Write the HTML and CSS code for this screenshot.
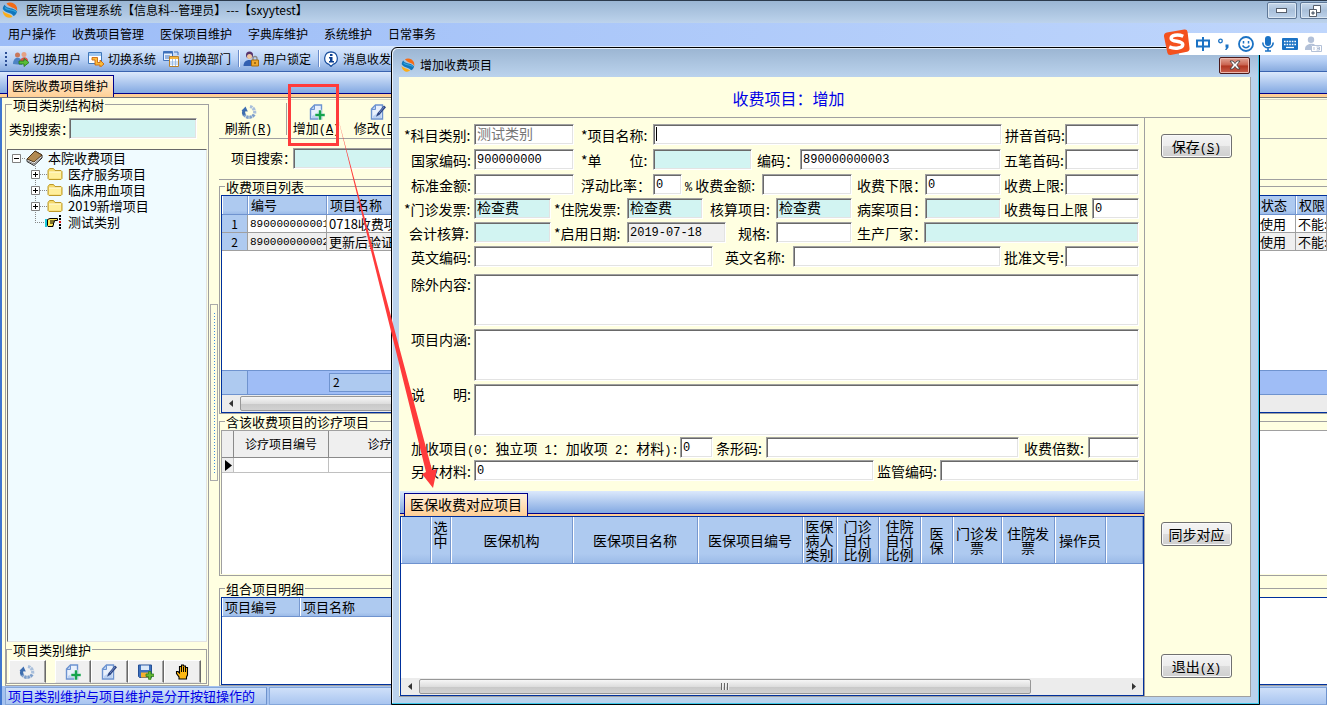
FILE: index.html
```html
<!DOCTYPE html>
<html lang="zh-CN">
<head>
<meta charset="utf-8">
<title>医院项目管理系统</title>
<link rel="stylesheet" href="styles.css">
</head>
<body>
<svg class="defs" aria-hidden="true">
  <symbol id="i-logo" viewBox="0 0 16 16">
    <path d="M4.500 1.500C8-.6 13.500 1 15 5.500L15.300 9C12.500 5 8 6 4.500 1.500z" fill="#f36b16"/>
    <path d="M2.500 2.800C5.500 7.500 11 5 15 9.500 14.500 12 13 13.500 11.500 14 9 10 4 11.500 .8 7 .8 5.500 1.500 4 2.500 2.800z" fill="#1177bd"/>
    <path d="M3 5.500c3 3.500 8 1.500 11 4.500" fill="none" stroke="#2fa5dd" stroke-width="1.200"/>
    <path d="M.6 9C4 12.500 7.500 11 10.500 14.700 6.500 17 1.500 15 .6 9z" fill="#fbad18"/>
  </symbol>
  <symbol id="i-refresh" viewBox="0 0 16 16">
    <path d="M9 2.500A6 6 0 0 1 13.500 10" fill="none" stroke="#a9bfdb" stroke-width="3.200" stroke-dasharray="2.600 .6"/>
    <path d="M13.200 10.500A6 6 0 0 1 3 10.500" fill="none" stroke="#7d9fcb" stroke-width="3.200" stroke-dasharray="2.600 .6"/>
    <path d="M3.200 11A6 6 0 0 1 3 6" fill="none" stroke="#3f6fae" stroke-width="3.200"/>
    <path d="M.5 7L4.500 2.500 6.800 7.500z" fill="#3c6db0"/>
  </symbol>
  <symbol id="i-page" viewBox="0 0 16 16">
    <path d="M5.500 1h7v14h-11V5z" fill="#e9f1fc" stroke="#6c93d0" stroke-width="1.400"/>
    <path d="M1.500 5.500h4V1z" fill="#b9cff0" stroke="#6c93d0"/>
    <path d="M3 12l8-5v7H3z" fill="#bcd2f2"/>
  </symbol>
  <symbol id="i-add" viewBox="0 0 16 16">
    <use href="#i-page"/>
    <path d="M9.500 6h3v3.500H16v3h-3.500V16h-3v-3.500H6v-3h3.500z" fill="#16a34c" stroke="#fff" stroke-width=".5"/>
  </symbol>
  <symbol id="i-edit" viewBox="0 0 16 16">
    <use href="#i-page"/>
    <path d="M14 1.500l2 1.800-6.500 7.500-3.500 2 1.500-3.800z" fill="#2c4480"/>
    <path d="M14 3L9 9" stroke="#6f89c6"/>
  </symbol>
  <symbol id="i-save" viewBox="0 0 16 16">
    <path d="M.5 1h13v12.500h-12l-1-1z" fill="#3d70bd" stroke="#244f96"/>
    <path d="M3 1.500h8V6H3z" fill="#dce9f8"/><path d="M3 8.500h8v5H3z" fill="#f3b02f"/>
    <path d="M10.500 7.500h2.500V10h2.800v2.500H13v2.800h-2.500v-2.800H8V10h2.500z" fill="#64b735" stroke="#2f7f1d" stroke-width=".8"/>
  </symbol>
  <symbol id="i-hand" viewBox="0 0 16 16">
    <path d="M4 15v-2L1.500 9.500V7.500H3L4.500 9V2.500h2V1h2v1h2v1.500h2V11L11.500 13v2z" fill="#fdb813" stroke="#000" stroke-width="1.100"/>
    <path d="M6.500 3v5M8.500 3v5M10.500 4v4" stroke="#000"/>
  </symbol>
  <symbol id="i-folder" viewBox="0 0 16 14">
    <path d="M1 3.500L2.500 1.500h4L8 3.500h6l1 1v7l-1 1H2l-1-1z" fill="#f5d96a" stroke="#bd9a2a"/>
    <path d="M2 5h12v6.500H2z" fill="#ffef9c"/><path d="M2 5h12" stroke="#fffbe0"/>
  </symbol>
</svg>

<div class="app">
  <header class="titlebar">
    <svg class="logo"><use href="#i-logo"/></svg>
    <h1 class="title-text">医院项目管理系统【信息科--管理员】---【sxyytest】</h1>
    <button class="win-btn" aria-label="最小化"><svg width="12" height="6"><rect x=".5" y=".5" width="10" height="4" fill="#fff" stroke="#555e6b"/></svg></button>
    <button class="win-btn" aria-label="还原"><svg width="12" height="12"><path d="M4.500.5h7v7h-7z" fill="#fff" stroke="#555e6b"/><path d="M.5 4.500h7v7h-7z" fill="#fff" stroke="#555e6b"/><path d="M3 7h2v2H3z" fill="#9ab" stroke="#555e6b"/></svg></button>
  </header>
  <nav class="menubar">
    <a href="#">用户操作</a><a href="#">收费项目管理</a><a href="#">医保项目维护</a><a href="#">字典库维护</a><a href="#">系统维护</a><a href="#">日常事务</a>
  </nav>
  <div class="toolbar">
    <span class="grip"></span>
    <button class="tool"><svg viewBox="0 0 16 16"><circle cx="4.500" cy="4" r="2.500" fill="#c9785c"/><circle cx="11" cy="3.500" r="2.500" fill="#e6a184"/><path d="M0 13c0-8 8-8 9-2v3z" fill="#4e83c4"/><path d="M7 10c1-5 8-5 8 0z" fill="#da5746"/><path d="M6 10h5V7.500l5 4-5 4V13H6z" fill="#59bd37" stroke="#25731c" stroke-width=".8"/></svg>切换用户</button>
    <button class="tool"><svg viewBox="0 0 16 16"><path d="M.5 1.500h13v11H.5z" fill="#fff" stroke="#3f77ba"/><path d="M1 2h12v3H1z" fill="#9fc6ee"/><path d="M4 6.500h5.500v5H12V9l4 4-4 3.500V14H7V9H4z" fill="#fbbc38" stroke="#ca6510" stroke-width=".9"/></svg>切换系统</button>
    <button class="tool"><svg viewBox="0 0 16 16"><path d="M.5.5h9v9h-9z" fill="#eaf3ff" stroke="#4275bf"/><path d="M.5.500h9v2h-9z" fill="#3e70b9"/><path d="M2 5h5M2 7h4M11 1h4v3" stroke="#4275bf" fill="none"/><path d="M6.500 5.500h9v10h-9z" fill="#fff" stroke="#b8812d"/><path d="M7 6h8v2H7z" fill="#f5b640"/><path d="M7 11h8M7 13h8M9.500 8v7M12.500 8v7" stroke="#8db2e2" stroke-width=".8"/></svg>切换部门</button>
    <span class="tool-sep"></span>
    <button class="tool"><svg viewBox="0 0 16 16"><circle cx="6.500" cy="4" r="3.500" fill="#56336c"/><circle cx="6.500" cy="5.500" r="2.500" fill="#f0c8a3"/><path d="M.5 15c0-8 11-8 12 0z" fill="#315fb0"/><path d="M10 9V7.500a2 2 0 0 1 4 0V9" fill="none" stroke="#888" stroke-width="1.300"/><path d="M8.500 9h7v6h-7z" fill="#efa92f" stroke="#a66d10"/><path d="M12 11v2" stroke="#573500"/></svg>用户锁定</button>
    <span class="tool-sep"></span>
    <button class="tool"><svg viewBox="0 0 16 16"><path d="M8 .8a6.500 6.500 0 0 1 2 12.600L8 15.500 6 13.400A6.500 6.500 0 0 1 8 .8z" fill="#fff" stroke="#174d9c" stroke-width="1.200"/><path d="M7 3h2.500v2H7zM6 6h3.500v4H11v1.500H6V10h1V7.500H6z" fill="#0b3f91"/></svg>消息收发</button>
  </div>
  <div class="tabstrip"><a class="tab" href="#">医院收费项目维护</a></div>

  <main class="workspace">
    <fieldset class="group category">
      <legend>项目类别结构树</legend>
      <div class="cat-search"><label for="cat-q">类别搜索：</label><input id="cat-q" class="box tint"></div>
      <ul class="tree">
        <li class="node root"><svg width="15" height="16"><path d="M11 8.500h4" stroke="#888" stroke-dasharray="1 1"/><path d="M1.500 4.500h8v8h-8z" fill="#fff" stroke="#808080"/><path d="M3 8.500h5" stroke="#000"/></svg><svg width="17" height="16"><path d="M1 9L9 1l7 4v3l-8 7.500-7-4z" fill="#fff" stroke="#222"/><path d="M1 9l8-8 7 4-8 7z" fill="#b28a51" stroke="#4b351b"/><path d="M2 11l6 3 8-7" fill="none" stroke="#777"/></svg><span>本院收费项目</span></li>
        <li class="node"><svg width="17" height="16"><path d="M5.500 0v16M10 8.500h7" stroke="#888" stroke-dasharray="1 1"/><path d="M1.500 4.500h8v8h-8z" fill="#fff" stroke="#808080"/><path d="M3 8.500h5M5.500 6v5" stroke="#000"/></svg><svg width="16" height="14"><use href="#i-folder"/></svg><span>医疗服务项目</span></li>
        <li class="node"><svg width="17" height="16"><path d="M5.500 0v16M10 8.500h7" stroke="#888" stroke-dasharray="1 1"/><path d="M1.500 4.500h8v8h-8z" fill="#fff" stroke="#808080"/><path d="M3 8.500h5M5.500 6v5" stroke="#000"/></svg><svg width="16" height="14"><use href="#i-folder"/></svg><span>临床用血项目</span></li>
        <li class="node"><svg width="17" height="16"><path d="M5.500 0v16M10 8.500h7" stroke="#888" stroke-dasharray="1 1"/><path d="M1.500 4.500h8v8h-8z" fill="#fff" stroke="#808080"/><path d="M3 8.500h5M5.500 6v5" stroke="#000"/></svg><svg width="16" height="14"><use href="#i-folder"/></svg><span>2019新增项目</span></li>
        <li class="node"><svg width="15" height="16"><path d="M5.500 0v9M5 8.500h10" fill="none" stroke="#888" stroke-dasharray="1 1"/></svg><svg width="18" height="16"><path d="M0 5h2v8H0z" fill="#18c8d8"/><path d="M2.500 5.500L5 4.500h7.500v2H9.500v1H9v1.500h-.5V11H8v1.500H3l-.5-1z" fill="#ffe95a" stroke="#000"/><path d="M5 7h4M5 9h3.500" stroke="#000"/><path d="M14 1h2v2h-2zM14 4h2v2h-2zM14 10h2v2h-2zM14 13h2v2h-2z"/><path d="M14 7h2v2h-2z" fill="#e31616"/></svg><span>测试类别</span></li>
      </ul>
      <fieldset class="group cat-tools">
        <legend>项目类别维护</legend>
        <div class="cat-buttons">
          <button class="flat first" aria-label="刷新"><svg><use href="#i-refresh"/></svg></button>
          <button class="flat" aria-label="增加"><svg><use href="#i-add"/></svg></button>
          <button class="flat" aria-label="修改"><svg><use href="#i-edit"/></svg></button>
          <button class="flat" aria-label="保存"><svg><use href="#i-save"/></svg></button>
          <button class="flat" aria-label="停用"><svg><use href="#i-hand"/></svg></button>
        </div>
      </fieldset>
    </fieldset>

    <div class="splitter"><span class="handle"></span></div>

    <section class="items">
      <div class="actions">
        <button class="action"><svg><use href="#i-refresh"/></svg><span>刷新<span class="hw">(<u>R</u>)</span></span></button>
        <span class="action-sep"></span>
        <button class="action"><svg><use href="#i-add"/></svg><span>增加<span class="hw">(<u>A</u>)</span></span></button>
        <button class="action"><svg><use href="#i-edit"/></svg><span>修改<span class="hw">(<u>D</u>)</span></span></button>
      </div>
      <div class="item-search"><label for="item-q">项目搜索：</label><input id="item-q" class="box tint"></div>

      <fieldset class="group list-group">
        <legend>收费项目列表</legend>
        <div class="grid-frame">
          <table class="grid">
            <colgroup><col class="c-stub"><col class="c-code"><col class="c-name"><col><col class="c-state"><col class="c-right"></colgroup>
            <thead><tr><th></th><th>编号</th><th>项目名称</th><th></th><th>状态</th><th>权限</th></tr></thead>
            <tbody>
              <tr><td class="stub">1</td><td class="num">890000000001</td><td>0718收费项目</td><td></td><td>使用</td><td>不能:</td></tr>
              <tr class="alt"><td class="stub">2</td><td class="num">890000000002</td><td>更新后验证项</td><td></td><td>使用</td><td>不能:</td></tr>
            </tbody>
          </table>
          <div class="grid-foot"><span class="foot-stub"></span><span class="foot-count">2</span></div>
          <div class="hscroll"><svg class="arrow" viewBox="0 0 4 7"><path d="M4 0v7L0 3.500z"/></svg><span class="thumb list-thumb"></span></div>
        </div>
      </fieldset>

      <fieldset class="group detail-group">
        <legend>含该收费项目的诊疗项目</legend>
        <div class="sheet">
          <table class="plain">
            <colgroup><col class="c-mark"><col class="c-dcode"><col></colgroup>
            <thead><tr><th></th><th>诊疗项目编号</th><th>诊疗项目</th></tr></thead>
            <tbody><tr><td class="mark"><svg width="7" height="11"><path d="M0 0v11l7-5.500z"/></svg></td><td></td><td></td></tr></tbody>
          </table>
        </div>
      </fieldset>

      <fieldset class="group combo-group">
        <legend>组合项目明细</legend>
        <div class="grid-frame">
          <table class="grid combo">
            <colgroup><col class="c-combo"><col></colgroup>
            <thead><tr><th>项目编号</th><th>项目名称</th></tr></thead>
          </table>
        </div>
      </fieldset>
    </section>
  </main>
  <footer class="status"><span class="panel hint">项目类别维护与项目维护是分开按钮操作的</span><span class="panel rest"></span></footer>
</div>

<section class="dialog" role="dialog" aria-labelledby="dlg-title">
  <header class="dlg-bar">
    <svg class="logo"><use href="#i-logo"/></svg>
    <h2 id="dlg-title" class="title-text">增加收费项目</h2>
    <button class="close" aria-label="关闭"><svg width="12" height="10"><path d="M1 1h3l2 2.500L8 1h3L7.800 5 11 9H8L6 6.500 4 9H1l3.200-4z" fill="#fff" stroke="#444" stroke-width=".9"/></svg></button>
  </header>
  <div class="dlg-body">
    <p class="dlg-heading">收费项目：增加</p>
    <div class="dlg-main">
      <div class="dlg-left">
        <form class="form">
          <div class="rows loose">
            <div class="row r1">
              <label for="f1">*科目类别:</label><input id="f1" class="box muted" value="测试类别">
              <label for="f2" class="pl">*项目名称:</label><span class="caret-field"><input id="f2" class="box"></span>
              <label for="f3" class="ps">拼音首码:</label><input id="f3" class="box">
            </div>
            <div class="row r2">
              <label for="f4" class="pl">国家编码:</label><input id="f4" class="box num-val" value="900000000">
              <label for="f5" class="pl">*单　　位:</label><input id="f5" class="box tint">
              <label for="f6" class="pm">编码：</label><input id="f6" class="box num-val" value="890000000003">
              <label for="f7" class="ps">五笔首码:</label><input id="f7" class="box">
            </div>
            <div class="row r3">
              <label for="f8" class="pl">标准金额:</label><input id="f8" class="box">
              <label for="f9" class="pl">浮动比率：</label><input id="f9" class="box num-val" value="0">
              <label for="f10" class="ps"><span class="hw">%</span> 收费金额:</label><input id="f10" class="box">
              <label for="f11" class="pm">收费下限：</label><input id="f11" class="box num-val" value="0">
              <label for="f12" class="ps">收费上限:</label><input id="f12" class="box">
            </div>
          </div>
          <div class="rows">
            <div class="row r4">
              <label for="f13">*门诊发票:</label><input id="f13" class="box tint" value="检查费">
              <label for="f14" class="ps">*住院发票:</label><input id="f14" class="box tint" value="检查费">
              <label for="f15" class="pl">核算项目:</label><input id="f15" class="box tint" value="检查费">
              <label for="f16" class="pm">病案项目：</label><input id="f16" class="box tint">
              <label for="f17" class="ps">收费每日上限</label><input id="f17" class="box num-val" value="0">
            </div>
            <div class="row r5">
              <label for="f18" class="pm">会计核算:</label><input id="f18" class="box tint">
              <label for="f19" class="ps">*启用日期:</label><input id="f19" class="box num-val readonly" value="2019-07-18" readonly>
              <label for="f20" class="px">规格:</label><input id="f20" class="box">
              <label for="f21" class="pm">生产厂家：</label><input id="f21" class="box tint">
            </div>
            <div class="row r6">
              <label for="f22" class="pl">英文编码:</label><input id="f22" class="box">
              <label for="f23" class="px">英文名称:</label><input id="f23" class="box">
              <label for="f24" class="ps">批准文号:</label><input id="f24" class="box">
            </div>
          </div>
          <div class="rows notes">
            <div class="row rt"><label for="f25" class="pl">除外内容:</label><textarea id="f25" class="box"></textarea></div>
            <div class="row rt"><label for="f26" class="pl">项目内涵:</label><textarea id="f26" class="box"></textarea></div>
            <div class="row rt"><label for="f27" class="pl">说　　明:</label><textarea id="f27" class="box"></textarea></div>
          </div>
          <div class="rows tight">
            <div class="row r7">
              <label for="f28" class="pl">加收项目<span class="hw">(0</span>：独立项<span class="hw"> 1</span>：加收项<span class="hw"> 2</span>：材料<span class="hw">):</span></label><input id="f28" class="box num-val" value="0">
              <label for="f29" class="ps">条形码:</label><input id="f29" class="box">
              <label for="f30" class="pm">收费倍数:</label><input id="f30" class="box">
            </div>
            <div class="row r8">
              <label for="f31" class="pl">另收材料:</label><input id="f31" class="box num-val" value="0">
              <label for="f32" class="ps">监管编码:</label><input id="f32" class="box">
            </div>
          </div>
        </form>
        <div class="tabstrip dlg-tabs"><a class="tab" href="#">医保收费对应项目</a></div>
        <div class="grid-frame map-frame">
          <table class="grid map">
            <colgroup><col class="m1"><col class="m2"><col class="m3"><col class="m4"><col class="m5"><col class="m6"><col class="m7"><col class="m7"><col class="m8"><col class="m9"><col class="m10"><col class="m11"><col></colgroup>
            <thead><tr><th></th><th class="up">选中</th><th>医保机构</th><th>医保项目名称</th><th>医保项目编号</th><th>医保<br>病人<br>类别</th><th>门诊<br>自付<br>比例</th><th>住院<br>自付<br>比例</th><th>医<br>保</th><th>门诊发<br>票</th><th>住院发<br>票</th><th>操作员</th><th></th></tr></thead>
          </table>
          <div class="hscroll"><svg class="arrow" viewBox="0 0 4 7"><path d="M4 0v7L0 3.500z"/></svg><span class="thumb map-thumb"><i></i><i></i><i></i></span><svg class="arrow end" viewBox="0 0 4 7"><path d="M0 0v7l4-3.500z"/></svg></div>
        </div>
      </div>
      <div class="dlg-side">
        <button class="push">保存<span class="hw">(<u>S</u>)</span></button>
        <button class="push sync">同步对应</button>
        <button class="push">退出<span class="hw">(<u>X</u>)</span></button>
      </div>
    </div>
  </div>
</section>

<div class="ime">
  <svg class="ime-logo" viewBox="0 0 28 28"><path d="M4 3.500l18-3q3-.5 3.500 2.500l2 17q.3 3-2.500 3.500l-17 3.500q-3 .3-3.500-2.500L1 7.500Q.8 4.300 4 3.500z" fill="#f4511e"/><path d="M21 7.500C15 5 8 6.500 8.500 10c.5 3.500 12 2 12 6 0 4-8 5-14 2.500" fill="none" stroke="#fff" stroke-width="3.600"/></svg>
  <svg width="14" height="16" viewBox="1 0 14 16"><path d="M2 4.500h12v6H2zM8 1v14" fill="none" stroke="#1b72c4" stroke-width="2"/></svg>
  <svg width="14" height="16" viewBox="0 0 14 16"><circle cx="3.500" cy="5" r="1.800" fill="none" stroke="#1b72c4" stroke-width="1.300"/><path d="M8.500 8.500h3v3l-2 2.500H8l1.300-2.500h-.8z" fill="#1b72c4"/></svg>
  <svg width="16" height="16" viewBox="0 0 16 16"><circle cx="8" cy="8" r="7" fill="none" stroke="#1b72c4" stroke-width="1.800"/><path d="M5.500 5v2.500M10.500 5v2.500M4.500 9.500q3.500 4.500 7 0" fill="none" stroke="#1b72c4" stroke-width="1.500"/></svg>
  <svg width="14" height="16" viewBox="0 0 14 16"><rect x="4" y="0" width="6" height="10" rx="3" fill="#1b72c4"/><path d="M1.800 6.500c0 7 10.400 7 10.400 0M7 12v3M4 15h6" fill="none" stroke="#1b72c4" stroke-width="1.600"/></svg>
  <svg width="16" height="16" viewBox="0 0 16 16"><rect y="2" width="16" height="12" rx="1" fill="#1b72c4"/><path d="M2 5.500h12M2 8.500h12" stroke="#fff" stroke-width="1.600" stroke-dasharray="1.600 1"/><path d="M4 11.500h8" stroke="#fff" stroke-width="1.300"/></svg>
  <svg width="17" height="16" viewBox="0 0 17 16"><circle cx="6" cy="3.800" r="3.200" fill="#b3c1d8"/><path d="M0 13c0-6 9-6 10-4H6v5H0z" fill="#b3c1d8"/><path d="M6.500 9.500h10v6h-10zM9 11v3M11.500 11h3v3h-3M12 12.500h2" fill="#fff" stroke="#b3c1d8"/></svg>
</div>

<svg class="annotation" width="152" height="410" viewBox="0 0 152 410" aria-hidden="true">
  <path d="M1.500 1.500h48v59h-48z" fill="none" stroke="#ff3b3b" stroke-width="3"/>
  <path d="M50 34L144 386l5-1-4 19-11-14 4-2z" fill="#ff3b3b"/>
</svg>
</body>
</html>
```

FILE: styles.css
```css
:root {
  --cream: #ffffe1;
  --tint: #d2f4f2;
  --head: #aecaf0;
  --navy: #00309c;
  --line: #a0a0a0;
}

* { box-sizing: border-box; }

body {
  margin: 0;
  height: 100vh;
  overflow: hidden;
  position: relative;
  font: 13px/16px "Noto Sans CJK SC", "Liberation Sans", sans-serif;
  color: #000;
}

a { color: inherit; text-decoration: none; }
button, input, textarea { font: inherit; color: inherit; margin: 0; }
.defs { display: none; }
svg { flex: none; display: block; }

/* half-width latin characters inside Chinese labels */
.hw { font-family: "Liberation Mono", monospace; font-size: 12px; line-height: 1; }

/* main window */
.app {
  height: 100%;
  display: flex;
  flex-direction: column;
  border-top: 1px solid #2b3a4c;
  background: var(--cream);
}

.titlebar {
  height: 22px;
  flex: none;
  display: flex;
  align-items: flex-start;
  padding: 1px 0 0 2px;
  background: linear-gradient(#9ab6d4, #bdd3ec);
  overflow: hidden;
}

.logo { width: 16px; height: 16px; margin-right: 8px; }
.title-text { flex: 1; margin: 0; font-size: 12px; font-weight: 400; white-space: nowrap; }

.win-btn {
  width: 30px;
  height: 17px;
  flex: none;
  margin-right: 3px;
  padding: 0;
  display: grid;
  place-items: center;
  border: 1px solid #5f7897;
  border-radius: 2px;
  background: linear-gradient(#c7d8ea, #a9c0da 50%, #bdd2ea);
  box-shadow: inset 0 0 0 1px #dbe7f3;
}
.win-btn:last-child { margin-right: -3px; }

.menubar {
  height: 23px;
  flex: none;
  display: flex;
  align-items: center;
  gap: 16px;
  padding: 0 0 2px 8px;
  font-size: 12px;
  background: linear-gradient(90deg, #9cbcf7, #bfd6fc);
}

.toolbar {
  height: 26px;
  flex: none;
  display: flex;
  align-items: center;
  gap: 7px;
  padding-left: 5px;
  font-size: 12px;
  border-bottom: 1px solid #3a64b0;
  background: linear-gradient(#dbe9fd, #b7d0f5 55%, #88abdf);
}
.grip { width: 2px; height: 14px; margin-right: -1px; background: repeating-linear-gradient(#2b4e94 0 2px, transparent 2px 4px); }
.tool { display: flex; align-items: center; gap: 4px; padding: 0; border: 0; background: none; white-space: nowrap; }
.tool svg { width: 16px; height: 16px; }
.tool-sep { width: 2px; height: 17px; margin-right: -4px; border-left: 1px solid #6a8ccb; border-right: 1px solid #fff; }

.tabstrip {
  height: 26px;
  flex: none;
  display: flex;
  align-items: flex-end;
  padding: 3px 0 0 7px;
  background: linear-gradient(#dce9fc, #83a9e2 21px, #00008b 21px 22px, #ffcf95 22px 25px, #777 25px);
}
.tab {
  height: 22px;
  margin-bottom: 1px;
  padding: 1px 5px 0 4px;
  font-size: 12px;
  line-height: 18px;
  border: 1px solid #00008b;
  border-bottom: 0;
  background: linear-gradient(#fff1dc, #ffcf95);
}

.workspace { flex: 1; min-height: 0; display: flex; padding-left: 4px; border-left: 2px solid #3f76cf; }

.group { min-width: 0; margin: 0; padding: 0; border: 1px solid var(--line); display: flex; flex-direction: column; }
.group > legend { margin-left: 5px; padding: 0 1px; line-height: 13px; }

.box {
  min-width: 0;
  width: 100%;
  height: 21px;
  padding: 0 2px 3px;
  border: 1px solid;
  border-color: var(--line) #fff #fff var(--line);
  border-radius: 0;
  outline: 0;
  background: #fff;
  box-shadow: inset 1px 1px #696969, inset -1px -1px #e3e3e3;
}
.box.tint { background: var(--tint); }

/* category column */
.category { width: 204px; flex: none; margin-left: -1px; }
.category > legend { margin-left: 6px; }
.cat-search { display: flex; align-items: center; padding: 7px 11px 10px 3px; }
.cat-search label { width: 60px; flex: none; white-space: nowrap; }

.tree {
  flex: 1;
  min-height: 0;
  margin: 0 1px;
  padding: 0 0 0 3px;
  list-style: none;
  background: #f0fbff;
  border: 1px solid;
  border-color: #696969 #e3e3e3 #e3e3e3 #696969;
}
.node { display: flex; align-items: center; height: 16px; padding-left: 19px; }
.node.root { padding-left: 0; }
.node span { margin-left: 5px; }

.cat-tools { margin: 1px 1px 1px 0; }
.cat-buttons { display: flex; padding: 4px 5px 0 2px; }
.flat {
  flex: 1;
  height: 23px;
  padding: 0;
  display: grid;
  place-items: center;
  border: 1px solid;
  border-color: #fff #696969 #e3e3e3 #fff;
  background: #f0f0f0;
  box-shadow: inset -1px 0 #a0a0a0;
}
.flat.first { margin-right: 9px; }
.flat svg { width: 16px; height: 16px; }

.splitter { width: 10px; flex: none; display: flex; flex-direction: column; align-items: center; padding: 206px 0 0; }
.handle { width: 8px; height: 177px; border: 1px solid #aaa; background: repeating-linear-gradient(#3d8be0 0 1px, transparent 1px 3px) 3px 8px / 1px 160px no-repeat; }

/* item column */
.items { flex: 1; min-width: 0; display: flex; flex-direction: column; }
.actions {
  height: 40px;
  flex: none;
  display: flex;
  margin-top: 1px;
  border-top: 1px solid #d5d5c5;
  border-bottom: 1px solid var(--line);
}
.action { width: 61px; display: flex; flex-direction: column; align-items: center; padding: 4px 2px 0 0; border: 0; background: none; white-space: nowrap; line-height: 15px; }
.action svg { width: 16px; height: 16px; }
.action-sep { width: 1px; height: 32px; margin: 3px 0 0 6px; background: var(--line); }

.item-search { height: 41px; flex: none; display: flex; align-items: center; padding: 0 0 2px 12px; border-bottom: 1px solid var(--line); }
.item-search label { width: 62px; flex: none; white-space: nowrap; }
.item-search .box { width: 260px; }

.list-group { flex: 234 1 0; border-right: 0; }
.detail-group { flex: 160 1 0; border-right: 0; margin: 1px 0 6px; }
.combo-group { flex: 103 1 0; border-right: 0; }

.grid-frame { flex: 1; min-height: 0; display: flex; flex-direction: column; margin: 2px 0 1px 1px; border: 1px solid var(--navy); background: #fff; overflow: hidden; }
.items .grid-frame { border-right: 0; margin-bottom: 0; }

.grid { width: 100%; table-layout: fixed; border-collapse: separate; border-spacing: 0; }
.grid.combo { width: 480px; }
.grid th {
  height: 19px;
  padding: 0 3px;
  text-align: left;
  font-weight: 400;
  white-space: nowrap;
  overflow: hidden;
  border-right: 1px solid #7798cf;
  border-bottom: 1px solid #6f93cf;
  background: linear-gradient(90deg, #fff 1px, transparent 1px), linear-gradient(var(--head) 80%, #9cbbe8);
}
.grid td { height: 18px; padding: 0 2px; line-height: 16px; white-space: nowrap; overflow: hidden; border-right: 1px solid var(--line); border-bottom: 1px solid var(--line); }
.grid .alt td { background: #efefef; }
.grid .stub, .grid .alt .stub { text-align: center; font-size: 12px; background: var(--head); }
.grid .num { font-family: "Liberation Mono", monospace; font-size: 11px; }
.c-stub { width: 26px; }
.c-code { width: 79px; }
.c-name { width: 93px; }
.c-state { width: 38px; }
.c-right { width: 31px; }
.c-combo { width: 78px; }

.grid-foot { height: 25px; flex: none; display: flex; margin-top: auto; border-top: 1px solid #6f93cf; border-bottom: 1px solid #6f93cf; background: #9fbdf6; }
.foot-stub { width: 26px; flex: none; background: var(--head); border-right: 1px solid #6f93cf; }
.foot-count { width: 93px; height: 19px; margin: 2px 0 0 81px; padding: 0 3px; border: 1px solid #6f93cf; background: var(--head); font-size: 12px; }

.hscroll { height: 17px; flex: none; display: flex; align-items: center; padding: 0 7px; background: #ececec; }
.arrow { width: 4px; height: 7px; fill: #333; }
.arrow.end { margin-left: auto; }
.thumb { height: 15px; margin-left: 7px; display: flex; align-items: center; justify-content: center; gap: 1px; border: 1px solid #979797; border-radius: 2px; background: linear-gradient(#f6f6f6, #dedede 50%, #c8c8c8 51%, #d2d2d2); }
.thumb i { width: 2px; height: 7px; background: #666; border-right: 1px solid #eee; }
.list-thumb { width: 60%; }
.map-thumb { width: 84%; }

.sheet { flex: 1; margin: 2px 0 1px 1px; border: 1px solid var(--line); border-width: 1px 0 0 1px; background: #fff; }
.plain { width: 233px; table-layout: fixed; border-collapse: separate; border-spacing: 0; }
.plain th { height: 27px; padding: 0; font-weight: 400; font-size: 12px; background: #efefef; border-right: 1px solid #8a8a8a; border-bottom: 1px solid #8a8a8a; }
.plain td { height: 15px; padding: 0; border-right: 1px solid #c0c0c0; border-bottom: 1px solid #c0c0c0; }
.plain .mark { background: #efefef; padding-left: 3px; }
.c-mark { width: 12px; }
.c-dcode { width: 95px; }

.status { height: 19px; flex: none; display: flex; gap: 2px; padding: 1px 0 0 3px; background: #a5c2ef; border-left: 2px solid #3f76cf; }
.panel { padding: 0 2px; line-height: 16px; color: #0000e6; border: 1px solid #84a6da; border-right-color: #6d92cd; background: linear-gradient(#cfe0f9, #a9c5f0); white-space: nowrap; }
.hint { width: 262px; }
.rest { flex: 1; }

/* dialog window */
.dialog {
  position: absolute;
  inset: 47px 67px 0 391px;
  display: flex;
  flex-direction: column;
  padding: 0 8px 7px 7px;
  border: 1px solid #000;
  border-radius: 6px 6px 0 0;
  background: linear-gradient(#9bb5d2, #bad2ec 28px);
  box-shadow: inset -1px -1px #3cc8ea, inset 1px 1px #e8f1fa;
}
.dlg-bar { height: 29px; flex: none; display: flex; align-items: center; padding: 5px 1px 0 2px; }
.dlg-bar .logo { width: 14px; height: 14px; margin-right: 5px; }
.close {
  width: 31px;
  height: 17px;
  padding: 0;
  display: grid;
  place-items: center;
  border: 1px solid #4c1a1a;
  border-radius: 2px;
  background: linear-gradient(#e2a596, #c9614d 48%, #b03520 52%, #c8604c);
  box-shadow: inset 0 0 0 1px #ecb9ae;
}
.dlg-body { flex: 1; min-height: 0; display: flex; flex-direction: column; background: var(--cream); border: 1px solid var(--line); border-width: 0 1px 1px 0; }
.dlg-heading { height: 41px; flex: none; margin: 0; padding-right: 72px; text-align: center; font-size: 16px; line-height: 42px; color: #0000e6; border-bottom: 1px solid var(--line); }
.dlg-main { flex: 1; min-height: 0; display: flex; }
.dlg-left { flex: 1; min-width: 0; display: flex; flex-direction: column; border-right: 1px solid var(--line); padding-left: 1px; }

.form { font-size: 14px; padding: 6px 5px 10px 4px; }
.rows { display: grid; gap: 3px; margin-bottom: 7px; }
.rows.loose { gap: 4px; margin-bottom: 3px; }
.rows.notes { margin-bottom: 1px; }
.rows.tight { gap: 2px; margin-bottom: 0; }
.row { display: grid; align-items: center; }
.row label { white-space: nowrap; line-height: 20px; }
.caret-field { position: relative; }
.caret-field .box { display: block; }
.caret-field::after { content: ""; position: absolute; left: 3px; top: 3px; width: 1px; height: 14px; background: #000; }
.ps { padding-left: 3px; }
.pm { padding-left: 5px; }
.pl { padding-left: 7px; }
.px { padding-left: 12px; }
.r1 { grid-template-columns: 70px 100px 79px 1fr 63px 74px; }
.r2 { grid-template-columns: 70px 100px 79px 99px 48px 1fr 64px 74px; }
.r3 { grid-template-columns: 70px 100px 79px 29px 80px 90px 73px 1fr 64px 74px; }
.r4 { grid-template-columns: 70px 77px 76px 76px 73px 76px 73px 1fr 91px 47px; }
.r5 { grid-template-columns: 70px 77px 76px 99px 50px 76px 72px 1fr; }
.r6 { grid-template-columns: 70px 239px 80px 1fr 64px 74px; }
.rt { grid-template-columns: 70px 1fr; align-items: start; }
.r7 { grid-template-columns: 276px 33px 53px 1fr 69px 51px; }
.r8 { grid-template-columns: 70px 1fr 66px 199px; }
.row textarea { height: 52px; resize: none; display: block; }
.row .muted { color: #777; }
.row .readonly { background: #f0f0f0; }
.row .num-val { padding-bottom: 0; font-family: "Liberation Mono", monospace; font-size: 12px; }

.dlg-tabs { height: 25px; padding: 2px 0 0 4px; background: linear-gradient(#dce9fc, #83a9e2 22px, #00008b 22px 23px, #ffcf95 23px); }
.dlg-tabs .tab { height: 23px; margin-bottom: 0; padding: 0 5px; font-size: 14px; line-height: 20px; }
.map-frame { margin: 0; }
.map th { height: 47px; padding: 0 0 1px; text-align: center; font-size: 14px; line-height: 14px; }
.map .up { white-space: normal; vertical-align: top; padding: 3px 2px 0; }
.map-frame .hscroll { margin-top: auto; }
.m1 { width: 30px; }
.m2 { width: 20px; }
.m3 { width: 122px; }
.m4 { width: 125px; }
.m5 { width: 105px; }
.m6 { width: 34px; }
.m7 { width: 42px; }
.m8 { width: 32px; }
.m9 { width: 49px; }
.m10 { width: 53px; }
.m11 { width: 51px; }

.dlg-side { width: 105px; flex: none; display: flex; flex-direction: column; justify-content: space-between; padding: 16px 18px 18px 16px; }
.push {
  height: 24px;
  padding: 0;
  font-size: 14px;
  line-height: 20px;
  border: 1px solid #707070;
  border-radius: 3px;
  background: linear-gradient(#f4f4f4, #ececec 50%, #dcdcdc 51%, #cfcfcf);
  box-shadow: inset 0 0 0 1px #fafafa;
}
.push.sync { margin-top: 256px; }

/* input method bar floats over both windows */
.ime { position: absolute; top: 33px; right: 0; height: 22px; display: flex; align-items: center; gap: 7px; padding: 0 5px 0 33px; background: linear-gradient(90deg, transparent 16px, #fff 16px); }
.ime-logo { position: absolute; left: 0; top: -4px; width: 27px; height: 27px; }

.annotation { position: absolute; left: 288px; top: 84px; pointer-events: none; }
```
